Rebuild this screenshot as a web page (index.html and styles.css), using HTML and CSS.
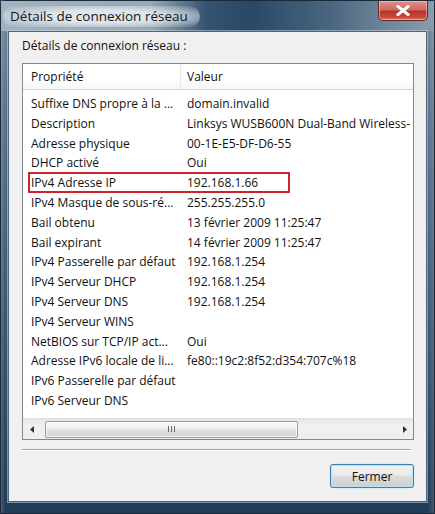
FILE: index.html
```html
<!DOCTYPE html>
<html lang="fr">
<head>
<meta charset="utf-8">
<title>Détails de connexion réseau</title>
<link rel="stylesheet" href="styles.css">
</head>
<body>
<div class="window">
  <div class="titlebar">
    <span class="title">Détails de connexion réseau</span>
    <div class="close" aria-label="Fermer">
      <svg width="14" height="11" viewBox="0 0 14 11"><path d="M2 1.5 L12 9.5 M12 1.5 L2 9.5" stroke="#fff" stroke-width="3" stroke-linecap="square"/></svg>
    </div>
  </div>
  <div class="client">
    <div class="caption">Détails de connexion réseau :</div>
    <div class="listbox">
      <div class="header">
        <div class="hcol hcol1">Propriété</div>
        <div class="hcol hcol2">Valeur</div>
      </div>
      <div class="rows">
        <div class="row"><span class="c1">Suffixe DNS propre à la ...</span><span class="c2">domain.invalid</span></div>
        <div class="row"><span class="c1">Description</span><span class="c2">Linksys WUSB600N Dual-Band Wireless-</span></div>
        <div class="row"><span class="c1">Adresse physique</span><span class="c2">00-1E-E5-DF-D6-55</span></div>
        <div class="row"><span class="c1">DHCP activé</span><span class="c2">Oui</span></div>
        <div class="row highlighted"><span class="c1">IPv4 Adresse IP</span><span class="c2">192.168.1.66</span><span class="redbox"></span></div>
        <div class="row"><span class="c1">IPv4 Masque de sous-ré...</span><span class="c2">255.255.255.0</span></div>
        <div class="row"><span class="c1">Bail obtenu</span><span class="c2">13 février 2009 11:25:47</span></div>
        <div class="row"><span class="c1">Bail expirant</span><span class="c2">14 février 2009 11:25:47</span></div>
        <div class="row"><span class="c1">IPv4 Passerelle par défaut</span><span class="c2">192.168.1.254</span></div>
        <div class="row"><span class="c1">IPv4 Serveur DHCP</span><span class="c2">192.168.1.254</span></div>
        <div class="row"><span class="c1">IPv4 Serveur DNS</span><span class="c2">192.168.1.254</span></div>
        <div class="row"><span class="c1">IPv4 Serveur WINS</span><span class="c2"></span></div>
        <div class="row"><span class="c1">NetBIOS sur TCP/IP act...</span><span class="c2">Oui</span></div>
        <div class="row"><span class="c1">Adresse IPv6 locale de li...</span><span class="c2">fe80::19c2:8f52:d354:707c%18</span></div>
        <div class="row"><span class="c1">IPv6 Passerelle par défaut</span><span class="c2"></span></div>
        <div class="row"><span class="c1">IPv6 Serveur DNS</span><span class="c2"></span></div>
      </div>
      <div class="hscroll">
        <div class="arrow"><svg width="4" height="7" viewBox="0 0 4 7"><path d="M4 0 L0 3.5 L4 7 Z" fill="#333"/></svg></div>
        <div class="thumb">
          <svg width="7" height="6" viewBox="0 0 7 6"><path d="M0.5 0 V6 M3.5 0 V6 M6.5 0 V6" stroke="#666" stroke-width="1"/></svg>
        </div>
        <div class="track"></div>
        <div class="arrow"><svg width="4" height="7" viewBox="0 0 4 7"><path d="M0 0 L4 3.5 L0 7 Z" fill="#333"/></svg></div>
      </div>
    </div>
    <div class="sep"></div>
    <div class="actions">
      <div class="btn">Fermer</div>
    </div>
  </div>
</div>
</body>
</html>
```

FILE: styles.css
```css
* { box-sizing: border-box; }

html, body {
  margin: 0;
  padding: 0;
  background: #24405a;
}

body {
  font-family: "Open Sans", "Noto Sans", "Liberation Sans", sans-serif;
  font-size: 12px;
  color: #111;
}

.window {
  width: 435px;
  height: 514px;
  display: flex;
  flex-direction: column;
  padding: 0 7px 11px 7px;
  border: 1px solid #1a2a39;
  border-radius: 6px 6px 0 0;
  background:
    linear-gradient(90deg, rgba(255,255,255,0.18) 0, rgba(255,255,255,0) 4px, rgba(255,255,255,0) 427px, rgba(255,255,255,0.15) 100%),
    linear-gradient(180deg, #7f93a4 0, #6c8396 30px, #58718a 120px, #3c5a76 300px, #1f3c58 100%);
}

.titlebar {
  height: 30px;
  display: flex;
  justify-content: space-between;
  align-items: flex-start;
  margin: 0 -7px;
  padding: 0 6px 0 2px;
  background: linear-gradient(90deg, #a2b2bf 0, #97a8b6 150px, #35536f 205px, #2a4866 250px, #4a6680 330px, #6c8397 380px, #8a9cab 100%);
}

.title {
  align-self: center;
  margin-top: 1px;
  padding: 1px 12px 2px 7px;
  font-size: 13.5px;
  color: #151515;
  border-radius: 12px;
  background: radial-gradient(ellipse at center, rgba(235,240,244,0.85) 40%, rgba(220,228,234,0.5) 70%, rgba(200,212,222,0) 100%);
}

.close {
  width: 50px;
  height: 20px;
  display: flex;
  align-items: center;
  justify-content: center;
  border: 1px solid #5a2a2a;
  border-top: none;
  border-radius: 0 0 5px 5px;
  background: linear-gradient(180deg, #e0928a 0, #d06a60 45%, #b8342a 55%, #c8473b 85%, #dd7b6a 100%);
  box-shadow: inset 0 0 0 1px rgba(255,220,210,0.5);
}

.client {
  flex: 1;
  display: flex;
  flex-direction: column;
  padding: 6px 12px 0 13px;
  background: #f0f0f0;
  border: 1px solid #4e667d;
  box-shadow: 0 0 0 1px rgba(210,222,232,0.5);
}

.caption {
  line-height: 16px;
  margin-bottom: 9px;
  color: #111;
}

.listbox {
  height: 377px;
  display: flex;
  flex-direction: column;
  background: #fff;
  border: 1px solid #828790;
  overflow: hidden;
}

.header {
  height: 26px;
  flex: none;
  display: flex;
  background: linear-gradient(180deg, #ffffff 0, #ffffff 60%, #f5f6f7 100%);
  border-bottom: 1px solid #d5d5d5;
}

.hcol {
  line-height: 25px;
}

.hcol1 {
  width: 158px;
  padding-left: 8px;
  border-right: 1px solid #e3e8ee;
}

.hcol2 {
  padding-left: 6px;
}

.rows {
  flex: 1;
  padding-top: 4px;
}

.row {
  position: relative;
  height: 19.8px;
  line-height: 19.8px;
  display: grid;
  grid-template-columns: 158px 1fr;
  white-space: nowrap;
}

.c1 {
  padding-left: 8px;
  overflow: hidden;
}

.c2 {
  padding-left: 6px;
  overflow: hidden;
}

.redbox {
  position: absolute;
  left: 5px;
  top: -1px;
  width: 262px;
  height: 21px;
  border: 2px solid #c9252b;
}

.hscroll {
  height: 21px;
  flex: none;
  display: flex;
  align-items: center;
  background: linear-gradient(180deg, #e6e6e6 0, #f0f0f0 30%, #eeeeee 100%);
  border-top: 1px solid #e0e0e0;
}

.arrow {
  width: 17px;
  height: 100%;
  display: flex;
  align-items: center;
  justify-content: center;
}

.thumb {
  width: 253px;
  height: 17px;
  margin-left: 5px;
  display: flex;
  align-items: center;
  justify-content: center;
  border: 1px solid #9c9c9c;
  border-radius: 2px;
  background: linear-gradient(180deg, #fbfbfb 0, #eeeeee 45%, #dedede 55%, #d6d6d6 100%);
  box-shadow: inset 0 0 0 1px rgba(255,255,255,0.7);
}

.track {
  flex: 1;
}

.sep {
  height: 2px;
  margin-top: 9px;
  margin-right: 3px;
  border-top: 1px solid #a0a0a0;
  border-bottom: 1px solid #ffffff;
}

.actions {
  display: flex;
  justify-content: flex-end;
  margin-top: 13px;
}

.btn {
  width: 84px;
  height: 24px;
  display: flex;
  align-items: center;
  justify-content: center;
  border: 1px solid #3c7fb1;
  border-radius: 3px;
  background: linear-gradient(180deg, #f2f2f2 0, #ebebeb 45%, #dddddd 50%, #cfcfcf 100%);
  box-shadow: inset 0 0 0 1px #b6e4f5, 0 0 1px #7cc0de;
  color: #111;
}
```
